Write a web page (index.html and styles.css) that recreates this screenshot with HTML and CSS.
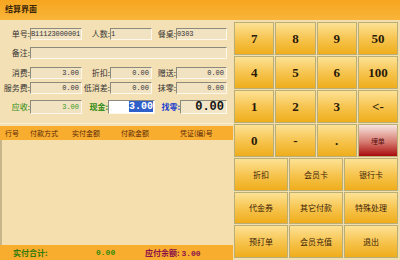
FILE: index.html
```html
<!DOCTYPE html>
<html>
<head>
<meta charset="utf-8">
<link rel="stylesheet" href="styles.css">
</head>
<body>
<div class="win">
  <div class="title">结算界面</div>
  <div class="main">
    <div class="left">
      <div class="form">
        <div class="row r1">
          <span class="lab w30">单号:</span><span class="box w52 la">B11123000001</span>
          <span class="lab w28">人数:</span><span class="box w42 la">1</span>
          <span class="lab w24">餐桌:</span><span class="box w51 la">0303</span>
        </div>
        <div class="row r2">
          <span class="lab w30">备注:</span><span class="box w197"></span>
        </div>
        <div class="row r3">
          <span class="lab w30">消费:</span><span class="box w52">3.00</span>
          <span class="lab w28">折扣:</span><span class="box w42">0.00</span>
          <span class="lab w24">赠送:</span><span class="box w51">0.00</span>
        </div>
        <div class="row r4">
          <span class="lab w30">服务费:</span><span class="box w52">0.00</span>
          <span class="lab w28">低消差:</span><span class="box w42">0.00</span>
          <span class="lab w24">抹零:</span><span class="box w51">0.00</span>
        </div>
        <div class="row r5">
          <span class="lab w30 green">应收:</span><span class="box w52 gtxt">3.00</span>
          <span class="lab w26 green b">现金:</span><span class="box w47 cash"><span class="sel">3.00</span></span>
          <span class="lab w25 blue b">找零:</span><span class="box w47 big">0.00</span>
        </div>
      </div>
      <div class="thead">
        <span class="c1">行号</span><span class="c2">付款方式</span><span class="c3">实付金额</span><span class="c4">付款金额</span><span class="c5">凭证(编)号</span>
      </div>
      <div class="tbody"></div>
      <div class="foot">
        <span class="f1">实付合计:</span><span class="f2">0.00</span><span class="f3">应付余额: <span class="num">3.00</span></span>
      </div>
    </div>
    <div class="pad">
      <div class="grid4">
        <div class="k">7</div><div class="k">8</div><div class="k">9</div><div class="k">50</div>
        <div class="k">4</div><div class="k">5</div><div class="k">6</div><div class="k">100</div>
        <div class="k">1</div><div class="k">2</div><div class="k">3</div><div class="k">&lt;-</div>
        <div class="k">0</div><div class="k">-</div><div class="k">.</div><div class="k red">埋单</div>
      </div>
      <div class="grid3">
        <div class="k t">折扣</div><div class="k t">会员卡</div><div class="k t">银行卡</div>
        <div class="k t">代金券</div><div class="k t">其它付款</div><div class="k t">特殊处理</div>
        <div class="k t">预打单</div><div class="k t">会员充值</div><div class="k t">退出</div>
      </div>
    </div>
  </div>
</div>
</body>
</html>
```
FILE: styles.css
```css
html, body { margin: 0; padding: 0; }
body {
  width: 400px; height: 260px; overflow: hidden;
  font-family: "Noto Sans CJK SC", "Noto Sans", sans-serif;
  background: #f3e0b4;
}
.win { width: 400px; height: 260px; display: flex; flex-direction: column; }
.title {
  height: 20px; box-sizing: border-box; padding: 3px 0 0 5px;
  background: linear-gradient(#f6a51f, #f9b53a);
  font-size: 8px; font-weight: bold; color: #3a2608; line-height: 12px;
}
.main { flex: 1; display: flex; }
.left { width: 233px; display: flex; flex-direction: column; background: #f3e0b4; }
.form { height: 104px; box-sizing: border-box; padding-top: 8px; border-bottom: 1px solid #fbeed0; }
.row { display: flex; align-items: center; height: 12px; color: #333; }
.r2 { margin-top: 7px; }
.r3 { margin-top: 8px; }
.r4 { margin-top: 3px; }
.r5 { margin-top: 6px; height: 14px; }
.lab { font-size: 8px; text-align: right; white-space: nowrap; line-height: 12px; }
.w30 { width: 30px; } .w28 { width: 28px; } .w24 { width: 24px; }
.w26 { width: 26px; } .w25 { width: 25px; }
.box {
  box-sizing: border-box; height: 12px;
  background: #f1e2c2;
  border-top: 1px solid #8c8a7c; border-left: 1px solid #8c8a7c;
  border-right: 1px solid #fff8ea; border-bottom: 1px solid #fff8ea;
  font-family: "Liberation Mono", monospace; font-size: 7px; line-height: 10px;
  text-align: right; padding: 0 2px; color: #333; overflow: hidden; white-space: nowrap;
}
.la { text-align: left; padding: 0; letter-spacing: -0.1px; }
.w52 { width: 52px; } .w42 { width: 42px; } .w51 { width: 51px; } .w47 { width: 47px; }
.w197 { width: 197px; }
.green { color: #2a8a10; }
.blue { color: #1c3fcf; }
.b { font-weight: bold; }
.gtxt { color: #3a9a20; }
.r5 .box { height: 14px; line-height: 12px; }
.cash { background: #ffffff; font-size: 10px; padding-right: 1px; }
.sel { background: #2f5fc8; color: #fff; font-weight: bold; }
.big { font-size: 12px; font-weight: bold; color: #111; background: #f3e5c8; }
.thead {
  height: 14px; margin-top: 2px; background: #f9ad2f;
  font-size: 7px; line-height: 14px; color: #5a2a08;
  display: flex;
}
.thead span { white-space: nowrap; }
.c1 { margin-left: 5px; width: 25px; }
.c2 { width: 42px; }
.c3 { width: 49px; }
.c4 { width: 59px; }
.tbody { flex: 1; background: #f5dfae; border-left: 2px solid #c9b58a; }
.foot {
  height: 15px; background: #f9ad2f; display: flex; align-items: center;
  font-size: 8px; font-weight: bold; line-height: 15px;
}
.f1 { margin-left: 13px; width: 83px; color: #2f7a08; }
.f2 { width: 49px; color: #2f8a08; font-family: "Liberation Mono", monospace; font-size: 8px; }
.f3 { color: #8a1048; }
.f3 .num { font-family: "Liberation Mono", monospace; }
.pad {
  flex: 1; box-sizing: border-box; padding: 2px 2px 2px 1px;
  display: flex; flex-direction: column; gap: 1px; background: #f2deb0;
}
.grid4 { display: grid; grid-template-columns: repeat(4, 1fr); grid-template-rows: repeat(4, 33px); gap: 1px; }
.grid3 { flex: 1; display: grid; grid-template-columns: repeat(3, 1fr); grid-template-rows: repeat(3, 1fr); gap: 1px; }
.k {
  box-sizing: border-box; border: 1px solid #b9ae76;
  background: linear-gradient(#fde295, #f6c24a 55%, #efad1c);
  display: flex; align-items: center; justify-content: center;
  font-family: "Liberation Serif", serif; font-weight: bold; font-size: 13px; color: #2a1a08;
}
.k.t { font-family: "Noto Sans CJK SC", sans-serif; font-weight: normal; font-size: 8px; color: #3a2208; }
.k.red {
  background: linear-gradient(#f6e6df, #d67a70 55%, #a80c0c);
  font-family: "Noto Sans CJK SC", sans-serif; font-weight: normal; font-size: 7px; color: #5a1010;
}
```
